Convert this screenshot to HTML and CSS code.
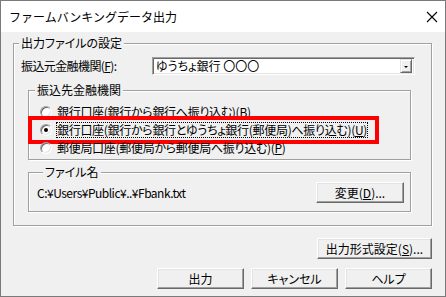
FILE: index.html
```html
<!DOCTYPE html>
<html lang="ja">
<head>
    <meta charset="UTF-8">
    <title>ファームバンキングデータ出力</title>
    <link rel="stylesheet" href="styles.css">
</head>
<body>
<div class="window">
    <!-- Title bar -->
    <div class="titlebar">
        <span class="title">ファームバンキングデータ出力</span>
        <svg class="close" width="12" height="12" viewBox="0 0 12 12">
            <path d="M1 1 L11 11 M11 1 L1 11" stroke="#000" stroke-width="1.1" fill="none"/>
        </svg>
    </div>

    <div class="client">
        <fieldset class="group outer">
            <legend>出力ファイルの設定</legend>

            <div class="row">
                <span class="label">振込元金融機関(<u>F</u>):</span>
                <div class="combo">
                    <span class="combo-text">ゆうちょ銀行 〇〇〇</span>
                    <span class="combo-btn"><span class="arrow"></span></span>
                </div>
            </div>

            <fieldset class="group inner dest">
                <legend>振込先金融機関</legend>
                <div class="radio-row">
                    <span class="radio"></span>
                    <span class="radio-text">銀行口座(銀行から銀行へ振り込む)(<u>B</u>)</span>
                </div>
                <div class="radio-row selected">
                    <span class="radio checked"></span>
                    <span class="radio-text focus">銀行口座(銀行から銀行とゆうちょ銀行(郵便局)へ振り込む)(<u>U</u>)</span>
                    <div class="highlight"></div>
                </div>
                <div class="radio-row">
                    <span class="radio"></span>
                    <span class="radio-text">郵便局口座(郵便局から郵便局へ振り込む)(<u>P</u>)</span>
                </div>
            </fieldset>

            <fieldset class="group inner file">
                <legend>ファイル名</legend>
                <div class="file-row">
                    <span class="path">C:¥Users¥Public¥..¥Fbank.txt</span>
                    <button class="btn">変更(<u>D</u>)...</button>
                </div>
            </fieldset>
        </fieldset>

        <div class="format-row">
            <button class="btn wide">出力形式設定(<u>S</u>)...</button>
        </div>

        <div class="footer">
            <button class="btn">出力</button>
            <button class="btn">キャンセル</button>
            <button class="btn">ヘルプ</button>
        </div>
    </div>
</div>
</body>
</html>
```

FILE: styles.css
```css
html, body {
    margin: 0;
    padding: 0;
}
body {
    font-family: "Noto Sans CJK JP", "Liberation Sans", sans-serif;
    font-size: 12px;
    color: #000;
    background-color: #fff;
}
.window {
    width: 446px;
    height: 297px;
    box-sizing: border-box;
    border: 1px solid #7a7a7a;
    background-color: #f0f0f0;
    display: flex;
    flex-direction: column;
}
.titlebar {
    height: 31px;
    background-color: #fff;
    display: flex;
    align-items: center;
    justify-content: space-between;
    padding: 0 7px 0 8px;
}
.title {
    line-height: 14px;
}
.close {
    display: block;
}
.client {
    flex: 1;
    padding: 4px 13px 0 12px;
    font-feature-settings: "palt";
}

/* group boxes */
.group {
    margin: 0;
    padding: 0;
    min-width: 0;
    border: 1px solid #a0a0a0;
    box-shadow: 1px 1px 0 #fff, inset 1px 1px 0 #fff;
}
.group legend {
    padding: 0 2px;
    line-height: 14px;
    background-color: #f0f0f0;
}
.outer {
    padding-bottom: 13px;
}
.outer > legend {
    margin-left: 5px;
}
.inner {
    width: 383px;
    box-sizing: border-box;
    margin-left: 14px;
}
.inner > legend {
    margin-left: 6px;
}

/* combo row */
.row {
    display: flex;
    align-items: center;
    margin-top: 7px;
    padding-left: 7px;
}
.label {
    width: 131px;
    line-height: 14px;
    letter-spacing: -0.6px;
}
.combo {
    width: 263px;
    height: 18px;
    box-sizing: border-box;
    background-color: #fff;
    border: 1px solid;
    border-color: #a0a0a0 #fff #fff #a0a0a0;
    box-shadow: inset 1px 1px 0 #696969, inset -1px -1px 0 #e3e3e3;
    display: flex;
    align-items: center;
    justify-content: space-between;
    padding: 0 2px 0 3px;
}
.combo-text {
    line-height: 14px;
}
.combo-btn {
    width: 12px;
    height: 14px;
    box-sizing: border-box;
    background-color: #f0f0f0;
    border: 1px solid;
    border-color: #e3e3e3 #696969 #696969 #e3e3e3;
    box-shadow: inset 1px 1px 0 #fff, inset -1px -1px 0 #a0a0a0;
    display: flex;
    align-items: center;
    justify-content: center;
}
.arrow {
    width: 0;
    height: 0;
    border-left: 2px solid transparent;
    border-right: 2px solid transparent;
    border-top: 2px solid #000;
    margin-top: 1px;
}

/* radio group */
.dest {
    margin-top: 8px;
    padding: 6px 0 2px;
}
.radio-row {
    display: flex;
    align-items: center;
    height: 18px;
    padding-left: 11px;
    gap: 5px;
    position: relative;
}
.radio-text {
    line-height: 14px;
    letter-spacing: -0.3px;
}
.radio {
    width: 12px;
    height: 12px;
    box-sizing: border-box;
    border-radius: 50%;
    border: 1px solid;
    border-color: #a0a0a0 #fff #fff #a0a0a0;
    background-color: #fff;
    box-shadow: inset 1px 1px 0 #696969, inset -1px -1px 0 #e3e3e3;
    position: relative;
}
.radio.checked::after {
    content: "";
    position: absolute;
    left: 3px;
    top: 3px;
    width: 4px;
    height: 4px;
    border-radius: 50%;
    background-color: #000;
}
.focus {
    outline: 1px dotted #000;
}
.highlight {
    position: absolute;
    left: -1px;
    top: -5px;
    width: 351px;
    height: 28px;
    box-sizing: border-box;
    border: 4px solid #f00;
}

/* file group */
.file {
    margin-top: 5px;
    padding: 3px 6px 8px 8px;
}
.file-row {
    display: flex;
    align-items: center;
    justify-content: space-between;
}
.path {
    letter-spacing: -0.5px;
}

/* buttons */
.btn {
    font-family: inherit;
    font-size: 12px;
    font-feature-settings: "palt";
    width: 88px;
    height: 21px;
    padding: 0;
    box-sizing: border-box;
    background-color: #f0f0f0;
    color: #000;
    border: 1px solid;
    border-color: #fff #696969 #696969 #fff;
    box-shadow: inset -1px -1px 0 #a0a0a0, inset 1px 1px 0 #e3e3e3;
    border-radius: 0;
    line-height: 14px;
}
.btn.wide {
    width: 115px;
}
.format-row {
    display: flex;
    justify-content: flex-end;
    margin-top: 12px;
}
.footer {
    display: flex;
    justify-content: flex-end;
    gap: 7px;
    margin-top: 9px;
}
.footer .btn {
    width: 87px;
}
```
